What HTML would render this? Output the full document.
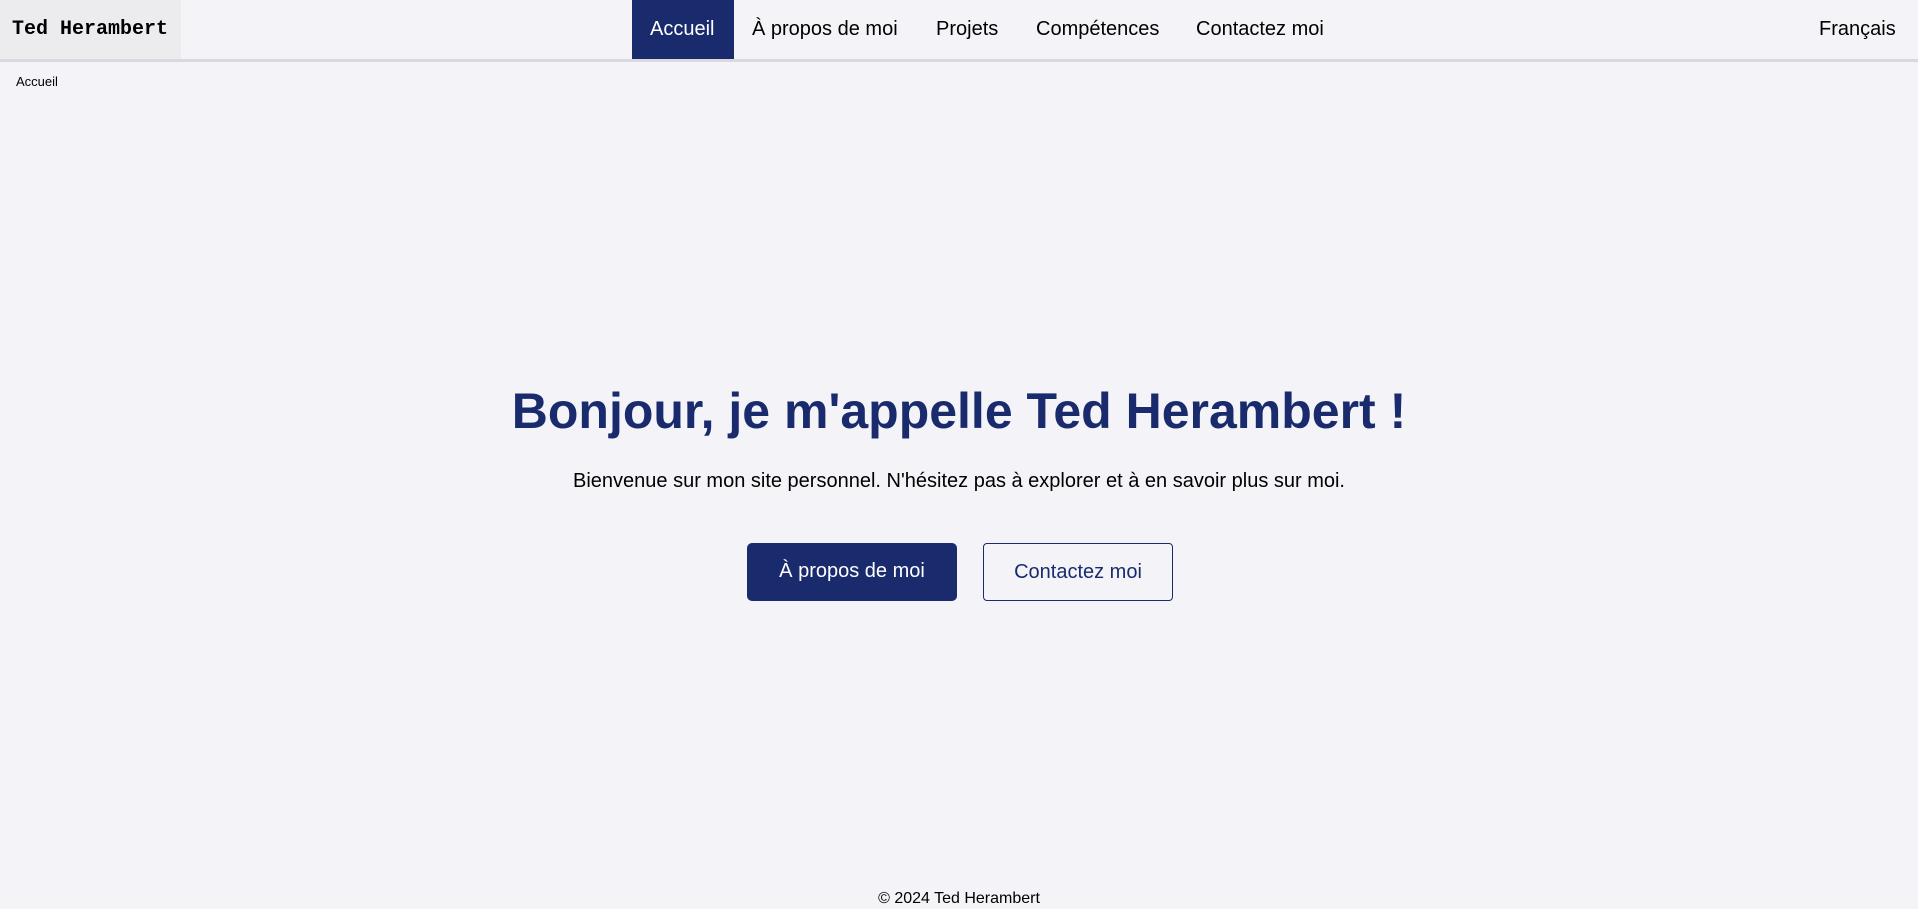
<!DOCTYPE html>
<html><head><meta charset="utf-8"><style>
*{margin:0;padding:0;box-sizing:border-box}
body{width:1918px;height:906px;background:#f4f4f8;font-family:"Liberation Sans",Arial,sans-serif;color:#000;position:relative;overflow:hidden}
header{position:absolute;left:0;top:0;width:1918px;height:62px;border-bottom:3px solid #d9d9df;background:#f4f4f8}
.logo{position:absolute;left:0;top:0;width:181px;height:59px;background:#ececef;font-family:"Liberation Mono",monospace;font-weight:bold;font-size:20px;line-height:59px;padding-left:12px}
nav a{position:absolute;top:0;height:59px;line-height:59px;font-size:20px;color:#000;text-decoration:none;white-space:nowrap}
nav a.act{background:#1a2b6d;color:#fff;padding:0 18px}
.bc{position:absolute;left:16px;top:74px;font-size:13px}
h1{position:absolute;left:0;width:1918px;top:378px;text-align:center;font-size:50px;line-height:66px;color:#1a2b6d;font-weight:bold}
p.w{position:absolute;left:0;width:1918px;top:468px;text-align:center;font-size:20px;line-height:26px}
.b{position:absolute;top:543px;height:58px;line-height:56px;font-size:20px;text-align:center;border-radius:5px}
.b1{left:747px;width:210px;background:#1a2b6d;color:#fff}
.b2{left:983px;width:190px;border:1px solid #1a2b6d;color:#1a2b6d;background:#f4f4f8;border-radius:4px}
footer{position:absolute;left:0;width:1918px;top:889px;text-align:center;font-size:16px;line-height:20px}
</style></head><body>
<header>
<div class="logo">Ted Herambert</div>
<nav>
<a class="act" style="left:632px;width:102px">Accueil</a>
<a style="left:752px">À propos de moi</a>
<a style="left:936px">Projets</a>
<a style="left:1036px">Compétences</a>
<a style="left:1196px">Contactez moi</a>
<a style="left:1819px">Français</a>
</nav>
</header>
<div class="bc">Accueil</div>
<h1>Bonjour, je m'appelle Ted Herambert !</h1>
<p class="w">Bienvenue sur mon site personnel. N'hésitez pas à explorer et à en savoir plus sur moi.</p>
<div class="b b1">À propos de moi</div>
<div class="b b2">Contactez moi</div>
<footer>© 2024 Ted Herambert</footer>
</body></html>
